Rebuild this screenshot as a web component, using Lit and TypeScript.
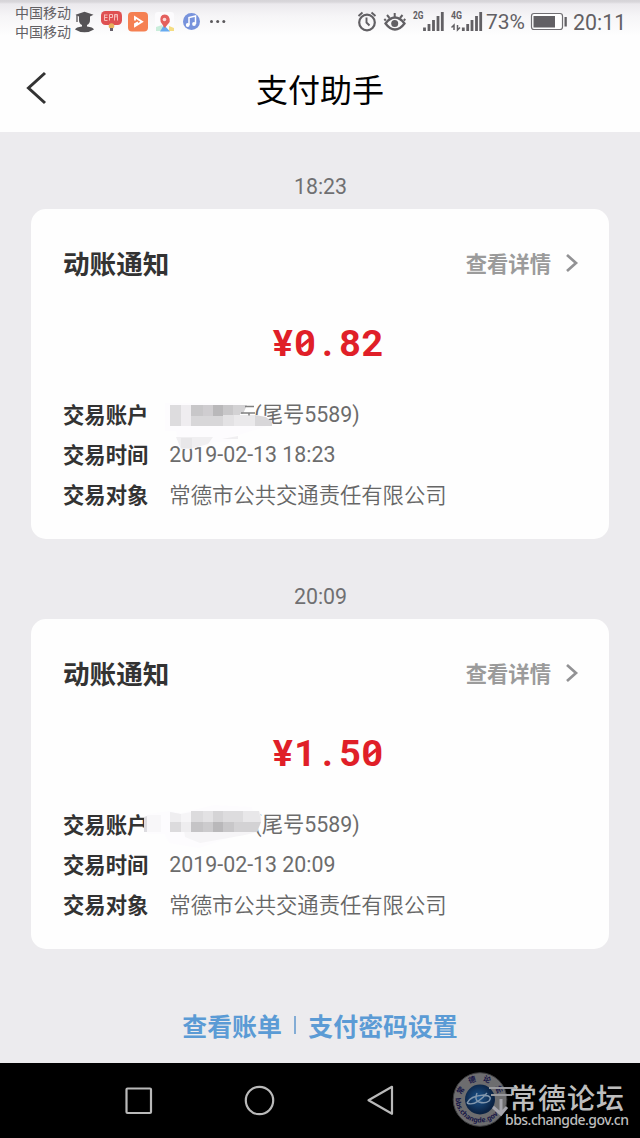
import { LitElement, html, css, svg } from "lit";
import { customElement, property } from "lit/decorators.js";

interface Notice {
  time: string;
  amount: string;
  date: string;
  variant: number;
}

const NOTICES: Notice[] = [
  { time: "18:23", amount: "¥0.82", date: "2019-02-13 18:23", variant: 0 },
  { time: "20:09", amount: "¥1.50", date: "2019-02-13 20:09", variant: 1 },
];

const MASKS = [
  svg`
    <path d="M26 8H102L99 20H118L128 21V31L100 40H96L90 47H74L65 52 40 53 37 36H26Z" fill="#fdfcfe"/>
    <rect x="31" y="10" width="11" height="21" fill="#dddcde"/>
    <rect x="42" y="10" width="10" height="21" fill="#efedf0"/>
    <rect x="52" y="10" width="12" height="11" fill="#c8c7c9"/>
    <rect x="64" y="10" width="10" height="11" fill="#cfcdd0"/>
    <rect x="74" y="10" width="10" height="11" fill="#b9b8ba"/>
    <rect x="84" y="10" width="10" height="11" fill="#c8c7c9"/>
    <path d="M94 10h14l-4 9h-3v2h-7z" fill="#d3d2d4"/>
    <rect x="52" y="21" width="32" height="10" fill="#d8d7d9"/>
    <rect x="84" y="20" width="11" height="11" fill="#e3e2e4"/>
    <rect x="95" y="20" width="21" height="11" fill="#eae9eb"/>
    <path d="M116 20l11 2 6 5v4h-17z" fill="#d8d7d9"/>
    <path d="M37 42h37l-5 7-11 3-7 2H42z" fill="#f0eff1"/>
    <rect x="42" y="43" width="11" height="10" fill="#e8e7e9"/>
    <path d="M83 44l16-3v3z" fill="#f0eff1"/>
    <path d="M106 11.500h9M102 18h14M110 18v2.500" stroke="#808080" stroke-width="1.500"/>`,
  svg`
    <path d="M8 9 31 6 42 8 75 0 113 2 116 24 60 43 30 38 26 29H8Z" fill="#fdfcfe"/>
    <path d="M5 12 8 11V27H5Z" fill="#dddce0"/>
    <path d="M8 10h14v17H8z" fill="#f8f7f9"/>
    <path d="M31 7l10 2 17-3h62q3 4 2 12l-4 9-12 3-45 8-15-6-1-7H31z" fill="#f6f5f7"/>
    <path d="M31 7l11 2v8H31z" fill="#efeef0"/>
    <rect x="31" y="17" width="11" height="10" fill="#dcdbdd"/>
    <rect x="42" y="17" width="10" height="10" fill="#eeedef"/>
    <rect x="52" y="6" width="12" height="11" fill="#dcdbdd"/>
    <rect x="64" y="6" width="10" height="11" fill="#e3e2e4"/>
    <rect x="74" y="6" width="10" height="11" fill="#d5d4d6"/>
    <rect x="84" y="6" width="20" height="11" fill="#dddcde"/>
    <path d="M104 6h16l2 11h-18z" fill="#e8e7e9"/>
    <rect x="52" y="17" width="12" height="10" fill="#c5c4c6"/>
    <rect x="64" y="17" width="10" height="10" fill="#cccbcd"/>
    <rect x="74" y="17" width="10" height="10" fill="#b9b8ba"/>
    <rect x="84" y="17" width="11" height="10" fill="#c8c7c9"/>
    <path d="M95 17h27l-4 10H95z" fill="#d3d2d4"/>`,
];

@customElement("notice-card")
class NoticeCard extends LitElement {
  @property({ attribute: false }) notice!: Notice;

  static styles = css`
    :host { display: block; }
    .time { padding: 2px 0 0 1px; text-align: center; color: #707072; font: 21.33px/44px Roboto, sans-serif; }
    .card { box-sizing: border-box; height: 330px; margin: 0 31px; padding: 33px 30px 0 32px;
      background: #fefefe; border-radius: 15px; display: flex; flex-direction: column; }
    .head { display: flex; justify-content: space-between; align-items: center; height: 42px; }
    .title { font-size: 26.6px; line-height: 40px; font-weight: 700; color: #333; }
    .more { display: flex; align-items: center; gap: 14px; font-size: 21.33px; line-height: 32px; font-weight: 700; color: #9b9b9b; }
    .more svg { display: block; }
    .amount { display: flex; height: 48px; margin-top: 35px; padding-left: 13px; justify-content: center;
      font: 700 37.5px/48px Roboto, sans-serif; color: #e01f28; }
    .amount span { width: 22.4px; display: flex; justify-content: center; position: relative; }
    .slash { position: absolute; left: 0; top: 0; width: 22px; height: 48px; }
    .rows { margin-top: 27px; display: flex; flex-direction: column; position: relative; }
    .row { height: 40px; line-height: 32px; display: flex; align-items: center; gap: 21px; font-size: 21.33px; white-space: nowrap; }
    .label { font-weight: 700; color: #333; }
    .value { font-weight: 350; color: #666; font-family: "Noto Sans CJK SC", sans-serif; }
    .num { font-weight: 400; color: #6c6c6c; font-family: Roboto, "Noto Sans CJK SC", sans-serif; padding-top: 3px; }
    .date { padding-top: 2px; }
    .account { padding-left: 85px; }
    .mask { position: absolute; left: 76px; top: 1px; }
  `;

  render() {
    const n = this.notice;
    return html`
      <div class="time">${n.time}</div>
      <section class="card">
        <div class="head">
          <span class="title">动账通知</span>
          <span class="more">查看详情
            <svg width="14" height="20" viewBox="0 0 14 20" fill="none" stroke="#929294" stroke-width="2.700"><path d="M2 2l9 8-9 8"/></svg>
          </span>
        </div>
        <div class="amount">${[...n.amount].map((c) => html`<span>${c}${c === "0"
          ? html`<svg class="slash" viewBox="0 0 22 48"><path d="M7 27.500l8.500-7" stroke="#e01f28" stroke-width="3.200"/></svg>` : null}</span>`)}</div>
        <div class="rows">
          <div class="row"><span class="label">交易账户</span><span class="value num account">(尾号5589)</span></div>
          <div class="row"><span class="label">交易时间</span><span class="value num date">${n.date}</span></div>
          <div class="row"><span class="label">交易对象</span><span class="value">常德市公共交通责任有限公司</span></div>
          <svg class="mask" width="165" height="60" viewBox="0 0 165 60">${MASKS[n.variant]}</svg>
        </div>
      </section>`;
  }
}

@customElement("app-root")
class AppRoot extends LitElement {
  static styles = css`
    :host { display: flex; flex-direction: column; width: 640px; height: 1138px; overflow: hidden;
      background: #ecebee; font-family: "Noto Sans CJK SC", sans-serif; }
    .status { height: 44px; flex: none; box-sizing: border-box; display: flex; justify-content: space-between;
      padding: 0 15px; color: #626064;
      background: linear-gradient(#d6d4d8 0, #d9d7db 2px, #ebe9ed 4px, #f6f5f7 16px, #fefefe 36px); }
    .left, .right { display: flex; align-items: flex-start; }
    .carrier { font-size: 14px; line-height: 19px; width: 60px; padding-top: 3px; }
    .left svg, .right svg { display: block; }
    .digits { font: 21.33px/45px Roboto, sans-serif; }
    .pct { width: 44px; font-size: 21px; }
    .clock { width: 52px; }
    .bar { height: 87.5px; flex: none; background: #fefefe; display: grid; grid-template-columns: 80px 1fr 80px; align-items: center; }
    .bar svg { margin-left: 24px; display: block; }
    .bar h1 { margin: 0; padding-top: 2px; text-align: center; font-size: 32px; font-weight: 400; line-height: 85px; color: #000; }
    main { flex: 1; padding-top: 31px; display: flex; flex-direction: column; }
    .list { display: flex; flex-direction: column; gap: 34px; }
    .links { height: 40px; margin-top: 56px; display: flex; justify-content: center; align-items: center; gap: 12.5px;
      font-size: 24.9px; line-height: 38px; font-weight: 700; color: #5b9bd5; }
    .links i { width: 1.5px; height: 18px; background: #83acd5; }
    .nav { height: 75px; flex: none; background: #000; display: flex; }
    .wm { font-family: "Noto Sans CJK SC", sans-serif; }
    .url { font-family: "Noto Sans", sans-serif; }
  `;

  render() {
    return html`
      <header class="status">
        <div class="left">
          <div class="carrier">中国移动<br />中国移动</div>
          <svg width="155" height="44" viewBox="75 0 155 44">
            <path d="M75.500 14.700L84.500 11.800 93.500 14.700 90 16.500V20q0 3.500-3 5v1.500q6 .5 7 3-4 2.700-9.500 2.700T75 29.500q1-2.500 7-3V25q-3-1.500-3-5v-3.500z" fill="#555356"/>
            <path d="M77 15v7" stroke="#555356" stroke-width="1.300"/>
            <rect x="101" y="11" width="21" height="14" rx="4.500" fill="#df5152"/>
            <path d="M104.500 15h3m-3 2.500h3m-3 3h3m-3-6v6m5 0v-6h3v3h-3m5 3v-6h3v6m-1.500-6v3" stroke="#f6bcb8" fill="none"/>
            <circle cx="111.500" cy="26" r="2.800" fill="#e8b25c"/><path d="M110 28h3v3h-3z" fill="#66606a"/>
            <rect x="128" y="12" width="20" height="19.500" rx="4" fill="#f58052"/>
            <path d="M135 20.500v-3.200l7 4.500-7 4.200v-2l3-1.600" fill="none" stroke="#fff" stroke-width="1.900"/>
            <rect x="155" y="12" width="19" height="19.500" rx="3" fill="#fcfbfd"/>
            <path d="M156 27l6-2 3 6h-9z" fill="#c9eddb"/><path d="M169 26l5 2v3h-5z" fill="#f5dd83"/>
            <path d="M164 25l6 6.500h-10z" fill="#67aaf0"/>
            <path d="M164.700 28l-4-6q-1.500-7.500 4-7.500t5 7.500z" fill="#e4605e"/><circle cx="164.500" cy="19.500" r="1.800" fill="#fbd9d9"/>
            <circle cx="191.500" cy="21.500" r="8.500" fill="#7893dc"/>
            <path d="M189 25v-7.500l6.500-1.500v8" fill="none" stroke="#fff" stroke-width="1.500"/><circle cx="187.700" cy="25" r="1.900" fill="#fff"/><circle cx="194" cy="24" r="1.900" fill="#fff"/>
            <g fill="#5b595c"><circle cx="211.500" cy="21.500" r="1.500"/><circle cx="217.700" cy="21.500" r="1.500"/><circle cx="223.800" cy="21.500" r="1.500"/></g>
          </svg>
        </div>
        <div class="right">
          <svg width="129" height="44" viewBox="357 0 129 44" fill="none" stroke="#626064">
            <circle cx="367" cy="22.500" r="7.800" stroke-width="2.200"/><path d="M366.500 17.500v5l3 3M358.500 16l4-3.500M375.500 16l-4-3.500" stroke-width="1.900"/>
            <path d="M385.500 23.500q4.500-6 9.500-6t9.500 6q-4.500 6-9.500 6t-9.500-6z" stroke-width="2.300"/><circle cx="394.700" cy="23.500" r="3.500" fill="#626064" stroke="none"/>
            <path d="M394.700 17v-4M389.500 18l-2.500-3M400 18l2.500-3M385.800 20.500l-1.500-1.500M403.800 20.500l1.500-1.500" stroke-width="2"/>
            <g fill="#626064" stroke="none" font-family="Roboto" font-weight="700" font-size="10.500"><text x="413" y="19" textLength="10.500" lengthAdjust="spacingAndGlyphs">2G</text><text x="451" y="19" textLength="11" lengthAdjust="spacingAndGlyphs">4G</text></g>
            <path d="M424.500 31v-3.500M429 31v-7M433.500 31V20M438 31V16M442.300 31V12M463.300 31v-3.500M467.700 31v-7M472 31V20M476.500 31V16M480.700 31V12" stroke-width="2.800"/>
            <path d="M454 30v-5l-2.500 2.500M457.500 25v5l2.500-2.500" stroke-width="1.500"/>
          </svg>
          <span class="digits pct">73%</span>
          <svg width="43" height="44" viewBox="530 0 43 44"><rect x="531.500" y="13.500" width="31" height="16" rx="2.500" fill="#fff" stroke="#706e72" stroke-width="1.200"/><rect x="533.500" y="16" width="21.500" height="11.500" fill="#626064"/><rect x="564.500" y="17" width="2.300" height="9.500" fill="#626064"/></svg>
          <span class="digits clock">20:11</span>
        </div>
      </header>
      <div class="bar">
        <svg width="24" height="40" viewBox="24 68 24 40" fill="none" stroke="#333" stroke-width="3"><path d="M45 73L28.500 88 45 103"/></svg>
        <h1>支付助手</h1>
      </div>
      <main>
        <div class="list">${NOTICES.map((n) => html`<notice-card .notice=${n}></notice-card>`)}</div>
        <div class="links"><span>查看账单</span><i></i><span>支付密码设置</span></div>
      </main>
      <footer class="nav">
        <svg width="640" height="75" viewBox="0 1063 640 75" fill="none">
          <defs>
            <radialGradient id="globe" cx=".45" cy=".45"><stop offset="0" stop-color="#1d558d"/><stop offset="1" stop-color="#0b2344"/></radialGradient>
            <path id="arcTop" d="M461.500 1099.500a18.500 18.500 0 0 1 37 0"/>
            <path id="arcBottom" d="M455.500 1098a24.500 24.500 0 0 0 48 7"/>
          </defs>
          <g stroke="#b9b9b9" stroke-width="2.200" stroke-linejoin="round">
            <rect x="126.500" y="1088.500" width="24.500" height="24.500" rx="1"/>
            <circle cx="259.500" cy="1100.500" r="13.700"/>
            <path d="M368.500 1100.300L392 1086.800v27z"/>
          </g>
          <circle cx="480" cy="1099.500" r="26.800" fill="#6d6d6f" stroke="#3b3b3d"/>
          <circle cx="480" cy="1099.500" r="15" fill="url(#globe)"/>
          <path d="M467 1103q3-7 17-8 9 1 5 6-4 3-10 1-5-2-2-9M467 1103q8 4 20-10" stroke="#8297ad" stroke-width="1.400"/>
          <g fill="#171646" font-weight="700">
            <text class="wm" font-size="7.500" letter-spacing="6"><textPath href="#arcTop" startOffset="4">常德论坛</textPath></text>
            <text class="url" font-size="7"><textPath href="#arcBottom">bbs.changde.gov</textPath></text>
          </g>
          <path d="M489 1088h26M491 1095h21" stroke="#9a9a9e" stroke-width="1.800"/>
          <path d="M501 1099v14M493 1107l8 7 6-7" stroke="#a5a5ad" stroke-width="3"/>
          <g fill="#bdbdbd">
            <text class="wm" x="509" y="1108.500" font-size="28" font-weight="500" textLength="115">常德论坛</text>
            <text class="url" x="505" y="1125" font-size="14" font-weight="500" textLength="124">bbs.changde.gov.cn</text>
          </g>
        </svg>
      </footer>`;
  }
}
